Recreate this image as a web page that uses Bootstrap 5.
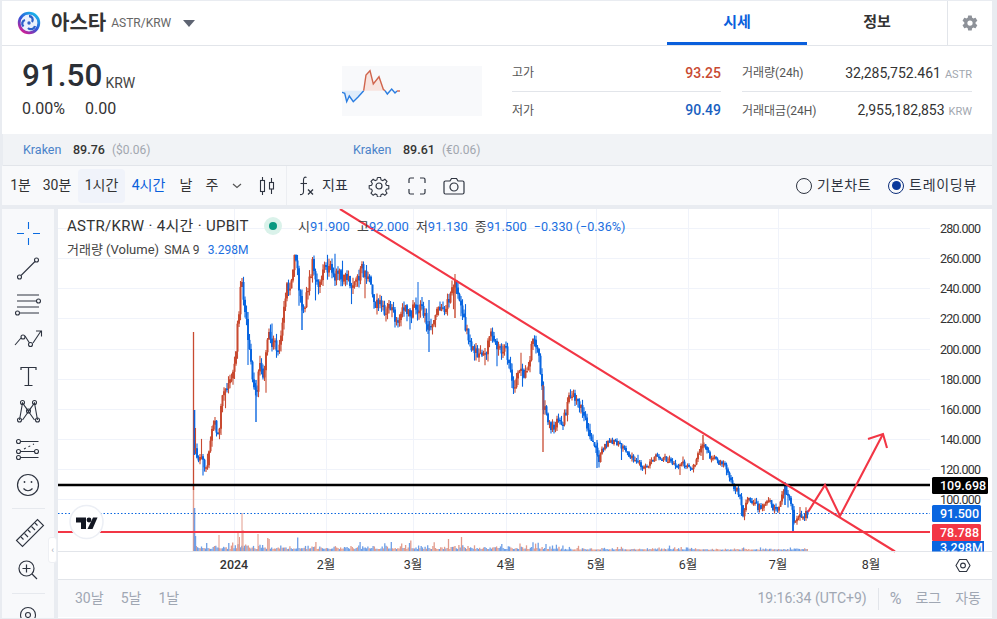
<!DOCTYPE html>
<html lang="ko">
<head>
<meta charset="utf-8">
<title>아스타 ASTR/KRW</title>
<link rel="stylesheet" href="https://cdn.jsdelivr.net/npm/bootstrap@5.3.0/dist/css/bootstrap.min.css">
<style>
html,body{height:619px;overflow:hidden}
body{margin:0;background:#e9ecf1;font-family:Roboto,"Noto Sans CJK KR",sans-serif;color:#333;font-size:14px}
.shell{width:990px;margin-left:2px;padding-top:1px}
.head{height:45px;background:#fff;border-bottom:1px solid #e2e5ea}
.coin-name{font-size:20px;font-weight:700;margin-left:10px;color:#333;line-height:1}
.coin-pair{font-size:12px;color:#666;margin-left:5px}
.caret-shape{width:0;height:0;border-left:6.5px solid transparent;border-right:6.5px solid transparent;border-top:7px solid #5e6472;margin-left:12px}
.tab-item{width:140px;height:44px;font-size:15px;font-weight:700;display:flex;align-items:center;justify-content:center;color:#333;border-bottom:3px solid transparent;padding-top:1px}
.tab-on{color:#0a5fdc;border-bottom-color:#0a5fdc}
.gear-box{width:45px;height:44px;border-left:1px solid #e2e5ea;margin-left:0}
.quote{height:88px;background:#fff}
.price-box{width:340px;padding:12px 0 0 20px}
.price-big{font-size:31.5px;font-weight:500;line-height:36px;color:#2b2f36}
.price-unit{font-size:14px;margin-left:3px;color:#444}
.price-chg{font-size:16px;margin-top:4px;line-height:22px;color:#333}
.spark-box{width:140px;height:50px;background:#f8f9fb;margin-top:20px}
.stat-a{width:209px;margin-left:30px;padding-top:9px}
.stat-b{width:230px;margin-left:21px;padding-top:9px}
.stat-row{height:37px;font-size:12px;color:#555}
.stat-line{border-bottom:1px solid #e2e5ea}
.stat-num{font-size:14px;font-weight:500}
.up-c{color:#c84a31}.dn-c{color:#1a5fc0}
.stat-val{font-size:14px;color:#333}
.stat-unit{font-size:11px;color:#a2a7af;margin-left:4px}
.ref-bar{height:32px;background:#f1f3f6;margin-left:1px;font-size:12.5px;border-bottom:1px solid #e2e5ea;padding-top:1px}
.ref-a{width:350px;padding-left:20px}
.ref-ex{color:#4a82c9;width:50px}
.ref-p{font-weight:500;color:#333;width:39px}
.ref-f{color:#a2a7af;font-size:12px}
.tools{height:39px;background:#f8f9fb;margin-top:0;color:#2e3440}
.tf{font-size:14px;display:flex;align-items:center;justify-content:center;height:34px;border-radius:4px;color:#333;white-space:nowrap}
.tf-on{background:#f0f3fa;margin:0 6px 0 7px;width:47px}
.tf-blue{color:#0a5fdc}
.tool-sep{width:1px;height:39px;background:#eceef2}
.radio-dot{width:16px;height:16px;border-radius:50%;border:1.5px solid #2e3440;display:inline-block;position:relative;margin-right:5px}
.radio-sel{border-color:#0d2f7a}
.radio-sel::after{content:"";position:absolute;inset:2.5px;border-radius:50%;background:#0b3a9c}
.radio-txt{white-space:nowrap;letter-spacing:.7px}
.work{margin-top:4px;height:409px}
.side{width:52px;background:#f8f9fb;height:409px;overflow:hidden;margin-right:4px}
.side svg{display:block}
.chart-col{width:934px;background:#fff;height:409px;display:flex;flex-direction:column}
.plot{position:relative;height:370px;flex:none}
.plot svg{display:block}
.legend-a{position:absolute;left:9px;top:7px;font-size:15px;letter-spacing:.3px;color:#333;line-height:20px;white-space:nowrap}
.legend-b{position:absolute;left:9px;top:31px;font-size:13px;color:#444;line-height:20px;white-space:nowrap}
.live-dot{width:18px;height:18px;border-radius:50%;background:#daf2ea;display:flex;align-items:center;justify-content:center;position:absolute;left:206px;top:8px}
.live-dot i{width:8px;height:8px;border-radius:50%;background:#089981;display:block}
.ohlc{position:absolute;left:240px;top:8px;font-size:13px;color:#444;line-height:20px;white-space:nowrap}
.ohlc b,.legend-b b{font-weight:400;color:#1c6fe0}
.ohlc span{margin-right:7px}
.ohlc-tail{font-size:12.6px}
.collapse-tab{position:absolute;left:-10px;top:328px;width:9px;height:26px;background:#fff;border:1px solid #eef0f4;border-radius:3px;color:#a6adb9;font-size:9px;line-height:24px;text-align:center}
.foot-bar{height:38px;background:#f8f9fb;border-top:1px solid #e2e5ea;color:#a0a7b3;font-size:14px;flex:none}
.foot-sep{width:1px;height:22px;background:#e2e5ea}
.ax{font-family:Roboto,"Noto Sans CJK KR",sans-serif;font-size:12.5px;fill:#333}
.axb{font-family:Roboto,sans-serif;font-size:12.5px;font-weight:500}
</style>
</head>
<body>
<div class="shell">
  <div class="head d-flex align-items-center">
    <svg width="24" height="24" viewBox="0 0 24 24" style="margin-left:15px">
      <defs><linearGradient id="astg" x1="0.8" y1="0" x2="0.1" y2="1"><stop offset="0" stop-color="#19b5ea"/><stop offset=".5" stop-color="#2f55d8"/><stop offset="1" stop-color="#e6178c"/></linearGradient></defs>
      <circle cx="12" cy="12" r="9.800" fill="#eaf0fc" stroke="url(#astg)" stroke-width="2.800"/>
      <g fill="none" stroke="#2d5fc8" stroke-width="2.300"><path d="M12 5a3.800 3.800 0 0 1 3 6"/><path d="M6.500 15.500a3.800 3.800 0 0 1 1.500-6.500"/><path d="M18 15a4.200 4.200 0 0 1-7 2"/></g>
      <circle cx="12" cy="12" r="1.700" fill="#2d5fc8"/>
    </svg>
    <span class="coin-name">아스타</span><span class="coin-pair">ASTR/KRW</span><span class="caret-shape"></span>
    <div class="ms-auto d-flex">
      <div class="tab-item tab-on">시세</div>
      <div class="tab-item">정보</div>
      <div class="gear-box d-flex align-items-center justify-content-center">
        <svg width="18" height="18" viewBox="0 0 24 24"><path fill="#8e9299" d="M19.400 13c.04-.33.06-.66.06-1s-.02-.67-.06-1l2.100-1.650a.5.5 0 0 0 .12-.64l-2-3.460a.5.5 0 0 0-.61-.22l-2.490 1a7.300 7.300 0 0 0-1.730-1l-.38-2.650A.49.49 0 0 0 13.900 2h-4a.49.49 0 0 0-.49.42l-.38 2.650c-.63.26-1.200.6-1.730 1l-2.490-1a.5.5 0 0 0-.61.22l-2 3.460a.5.5 0 0 0 .12.64L4.420 11c-.04.33-.06.67-.06 1s.02.67.06 1l-2.100 1.650a.5.5 0 0 0-.12.64l2 3.460c.12.22.39.3.61.22l2.490-1c.53.4 1.100.74 1.730 1l.38 2.650c.04.24.25.42.49.42h4c.25 0 .45-.18.49-.42l.38-2.650c.63-.26 1.200-.6 1.730-1l2.490 1c.23.08.49 0 .61-.22l2-3.460a.5.5 0 0 0-.12-.64zM12 15.500a3.500 3.500 0 1 1 0-7 3.500 3.500 0 0 1 0 7z"/></svg>
      </div>
    </div>
  </div>

  <div class="quote d-flex">
    <div class="price-box">
      <div class="d-flex align-items-end"><span class="price-big">91.50</span><span class="price-unit">KRW</span></div>
      <div class="price-chg d-flex gap-0"><span style="width:63px">0.00%</span><span>0.00</span></div>
    </div>
    <div class="spark-box">
      <svg width="140" height="50" viewBox="0 0 140 50">
        <polygon fill="#dfecfb" points="0,24.700 0,26.300 2.700,27.300 4.700,35.700 7.300,30 11.300,35.700 16.300,30.700 21.700,24.700"/>
        <polygon fill="#f8e4df" points="21.700,24.700 24,9 28,4.700 31.300,18 37,10.700 41.300,23.300 43,24.700"/>
        <polyline fill="none" stroke="#2a7de1" stroke-width="1.400" points="0,26.300 2.700,27.300 4.700,35.700 7.300,30 11.300,35.700 16.300,30.700 21.700,24.700"/>
        <polyline fill="none" stroke="#d0654d" stroke-width="1.400" points="21.700,24.700 24,9 28,4.700 31.300,18 37,10.700 41.300,23.300 43,24.700"/>
        <polyline fill="none" stroke="#2a7de1" stroke-width="1.400" points="43,24.700 45.300,28 49.700,23 53,27 55,25"/>
        <polyline fill="none" stroke="#d0654d" stroke-width="1.400" points="55,25 58,25"/>
      </svg>
    </div>
    <div class="stat-a">
      <div class="stat-row stat-line d-flex justify-content-between align-items-center"><span>고가</span><span class="stat-num up-c">93.25</span></div>
      <div class="stat-row d-flex justify-content-between align-items-center"><span>저가</span><span class="stat-num dn-c">90.49</span></div>
    </div>
    <div class="stat-b">
      <div class="stat-row stat-line d-flex justify-content-between align-items-center"><span>거래량(24h)</span><span class="text-end"><span class="stat-val">32,285,752.461</span><span class="stat-unit">ASTR</span></span></div>
      <div class="stat-row d-flex justify-content-between align-items-center"><span>거래대금(24H)</span><span class="text-end"><span class="stat-val">2,955,182,853</span><span class="stat-unit">KRW</span></span></div>
    </div>
  </div>

  <div class="ref-bar d-flex align-items-center">
    <div class="ref-a d-flex"><span class="ref-ex">Kraken</span><span class="ref-p">89.76</span><span class="ref-f">($0.06)</span></div>
    <div class="d-flex"><span class="ref-ex">Kraken</span><span class="ref-p">89.61</span><span class="ref-f">(€0.06)</span></div>
  </div>

  <div class="tools d-flex align-items-center">
    <div class="tf" style="margin-left:8px;width:21px">1분</div>
    <div class="tf" style="margin-left:12px;width:28px">30분</div>
    <div class="tf tf-on">1시간</div>
    <div class="tf tf-blue" style="width:35px">4시간</div>
    <div class="tf" style="margin-left:14px;width:12px">날</div>
    <div class="tf" style="margin-left:13px;width:14px">주</div>
    <svg width="10" height="6" viewBox="0 0 10 6" style="margin-left:13px"><path d="M1 1l4 3.500L9 1" fill="none" stroke="#555" stroke-width="1.200"/></svg>
    <svg width="16" height="20" viewBox="0 0 16 20" style="margin-left:17px"><g fill="none" stroke="#2e3440" stroke-width="1.100"><rect x="1.500" y="4.500" width="4" height="11"/><path d="M3.500 1v3.500M3.500 15.500V19"/><rect x="10.500" y="6.500" width="4" height="6.500"/><path d="M12.500 2v4.500M12.500 13v5"/></g></svg>
    <div class="tool-sep" style="margin-left:11px"></div>
    <svg width="18" height="22" viewBox="0 0 18 22" style="margin-left:10px"><g fill="none" stroke="#2e3440" stroke-width="1.100"><path d="M9.500 2.500C7.500 1.500 6.500 3 6.500 5v11.500c0 2-1 3.500-3.500 3"/><path d="M3.500 8.500h6.500"/><path d="M11 14.500l5 5M16 14.500l-5 5" stroke-width="1.300"/></g></svg>
    <span style="margin-left:7px;width:27px;white-space:nowrap;font-size:14px">지표</span>
    <svg width="22" height="22" viewBox="0 0 22 22" style="margin-left:19px"><g fill="none" stroke="#2e3440" stroke-width="1.200"><circle cx="11" cy="11" r="3"/><path d="M9.300 1.500h3.400l.6 2.700 1.900.8 2.300-1.500 2.400 2.400-1.500 2.300.8 1.900 2.700.6v3.400l-2.700.6-.8 1.900 1.500 2.300-2.400 2.400-2.300-1.500-1.900.8-.6 2.700H9.300l-.6-2.700-1.900-.8-2.300 1.500-2.400-2.400 1.500-2.300-.8-1.900-2.700-.6" transform="translate(1.100 1.100) scale(.9)"/><path d="M9.300 1.500l-.6 2.700-1.900.8-2.300-1.500-2.400 2.400 1.500 2.300-.8 1.900-2.700.6v3.400" transform="translate(1.100 1.100) scale(.9)"/></g></svg>
    <svg width="18" height="18" viewBox="0 0 18 18" style="margin-left:18px"><path d="M1 6V2.500A1.500 1.500 0 0 1 2.500 1H6M12 1h3.500A1.500 1.500 0 0 1 17 2.500V6M17 12v3.500a1.500 1.500 0 0 1-1.500 1.500H12M6 17H2.500A1.500 1.500 0 0 1 1 15.500V12" fill="none" stroke="#2e3440" stroke-width="1.200"/></svg>
    <svg width="22" height="18" viewBox="0 0 22 18" style="margin-left:17px"><g fill="none" stroke="#2e3440" stroke-width="1.200"><path d="M2.500 4H7l1.500-2.500h5L15 4h4.500A1.500 1.500 0 0 1 21 5.500v10a1.500 1.500 0 0 1-1.500 1.500h-17A1.500 1.500 0 0 1 1 15.500v-10A1.500 1.500 0 0 1 2.500 4z"/><circle cx="11" cy="10" r="4"/></g></svg>
    <div class="ms-auto d-flex align-items-center" style="padding-right:15px">
      <span class="radio-dot"></span><span class="radio-txt" style="width:58px">기본차트</span>
      <span class="radio-dot radio-sel" style="margin-left:13px"></span><span class="radio-txt">트레이딩뷰</span>
    </div>
  </div>

  <div class="work d-flex">
    <div class="side">
      <svg width="52" height="409" viewBox="2 209 52 409">
        <g fill="none" stroke="#2e3440" stroke-width="1.100">
          <path d="M28.500 222v7M28.500 238v7M17 233.500h7M33 233.500h7" stroke="#0a6be0" stroke-width="1.100"/>
          <g><circle cx="19.500" cy="277" r="2"/><circle cx="36.500" cy="260" r="2"/><path d="M21 275.500l14-14"/></g>
          <g><path d="M17 295h22M17 301h19M17 307h22M20 313h19"/><circle cx="38.500" cy="301" r="2"/><circle cx="17.500" cy="313" r="2"/></g>
          <g><path d="M15 345l6-7M25 336l4.500 7M33 343l8-12M36 331h5.500v5.500"/><circle cx="23" cy="337" r="2"/><circle cx="30.500" cy="344.500" r="2"/></g>
          <path d="M21 370v-2.500h15v2.500M28.500 367.500v18M24.500 385.500h8" stroke-width="1.200"/>
          <g><path d="M19.500 420l3-17 6 8 6-8 3 17M22.500 403l12 17M34.500 403l-12 17"/><circle cx="22.500" cy="402.500" r="2"/><circle cx="34.500" cy="402.500" r="2"/><circle cx="19.500" cy="420" r="2"/><circle cx="37.500" cy="420" r="2"/><circle cx="28.500" cy="411" r="2"/></g>
          <g><path d="M20.500 441.500h18M20.500 451.500h14M20.500 457.500h18"/><path d="M24 449l10-5" stroke-dasharray="2 3"/><circle cx="18.500" cy="441.500" r="2"/><circle cx="18.500" cy="451.500" r="2"/><circle cx="36.500" cy="451.500" r="2"/><circle cx="18.500" cy="457.500" r="2"/></g>
          <g stroke-width="1.200"><circle cx="28" cy="485" r="10.500"/><path d="M23.500 488.500c2.500 3 6.500 3 9 0"/></g>
          <circle cx="24.500" cy="482" r=".9" fill="#2e3440" stroke="none"/><circle cx="31.500" cy="482" r=".9" fill="#2e3440" stroke="none"/>
          <g><path d="M17 541l21-21 6 6-21 21z" transform="translate(-0.500 -0.500)"/><path d="M21 537l2.500 2.500M24.500 533.500l3.500 3.500M28 530l2.500 2.500M31.500 526.500l3.500 3.500M35 523l2.500 2.500"/></g>
          <g stroke-width="1.200"><circle cx="26.500" cy="568.500" r="7.500"/><path d="M32 574l5 5M26.500 564.500v8M22.500 568.500h8"/></g>
          <g><circle cx="28" cy="615" r="7.500"/><circle cx="28" cy="615" r="2.500"/></g>
        </g>
        <path d="M12 508.500h33M12 593.500h33" stroke="#e6e9ee" stroke-width="1"/>
      </svg>
    </div>
    <div class="chart-col">
      <div class="plot">
        <svg id="pl" width="934" height="370" viewBox="58 209 934 370"></svg>
        <div class="legend-a">ASTR/KRW · 4시간 · UPBIT</div>
        <div class="live-dot"><i></i></div>
        <div class="ohlc"><span>시<b>91.900</b></span><span>고<b>92.000</b></span><span>저<b>91.130</b></span><span>종<b>91.500</b></span><b class="ohlc-tail">−0.330 (−0.36%)</b></div>
        <div class="legend-b">거래량 (Volume) <span style="font-size:12px;margin-left:2px">SMA 9</span> <b style="font-size:12px;margin-left:5px">3.298M</b></div>
        <div class="collapse-tab">‹</div>
      </div>
      <div class="foot-bar d-flex align-items-center">
        <span style="margin-left:17px">30날</span><span style="margin-left:17px">5날</span><span style="margin-left:17px">1날</span>
        <span class="ms-auto">19:16:34 (UTC+9)</span>
        <span class="foot-sep" style="margin-left:11px"></span>
        <span style="margin-left:11px;font-size:16px">%</span><span style="margin-left:14px">로그</span><span style="margin-left:14px;margin-right:11px">자동</span>
      </div>
    </div>
  </div>
</div>
<script>
(function(){
var s=1234567;function r(){s=(s*1664525+1013904223)%4294967296;return s/4294967296;}
var k=[[193,420],[196,450],[200,455],[206,467],[210,450],[213,425],[217,432],[219,425],[222,395],[226,392],[229,385],[233,365],[236,345],[239,310],[241,275],[244,300],[247,330],[250,355],[256,400],[260,360],[264,385],[267,330],[272,345],[277,350],[282,320],[287,290],[291,290],[295,245],[299,285],[302,315],[306,300],[313,262],[318,285],[325,270],[333,272],[347,285],[363,272],[377,302],[397,318],[418,305],[429,322],[443,312],[455,285],[463,318],[472,352],[480,358],[492,337],[507,353],[513,380],[527,370],[533,338],[540,362],[543,405],[550,425],[563,418],[572,395],[577,398],[590,432],[598,458],[610,440],[625,450],[640,467],[655,458],[670,462],[695,468],[703,440],[710,460],[722,462],[732,482],[740,497],[743,513],[748,500],[755,505],[762,510],[765,502],[778,510],[785,485],[792,510],[794,528],[798,517],[808,512]];
function base(x){for(var i=1;i<k.length;i++){if(x<=k[i][0]){var a=k[i-1],b=k[i];return a[1]+(b[1]-a[1])*(x-a[0])/(b[0]-a[0]);}}return 512;}
function L(x1,y1,x2,y2,c,w,extra){return '<line x1="'+x1+'" y1="'+y1+'" x2="'+x2+'" y2="'+y2+'" stroke="'+c+'" stroke-width="'+w+'"'+(extra||'')+'/>';}
function trend(x){return 209+(x-340)*.617;}
var h='',UP='#c84a31',DN='#0a66e0';
for(var p=280;p>=100;p-=20){var y=Math.round(228+(280-p)*1.5078)+.5;h+=L(58,y,930,y,'#f0f3fa',1);}
[234,326,413,506,596,688,778,871].forEach(function(x){h+=L(x+.5,209,x+.5,551,'#f0f3fa',1);});
var vh='';
for(var x=195;x<808;x+=1.3){var decay=x<560?1:(x<700?.45:.3);var v=(1+r()*r()*r()*14)*decay+1;var c=r()>.5?'#e29b8c':'#6f9fe6';vh+=L(x.toFixed(1),551,x.toFixed(1),(551-v).toFixed(1),c,1.3);}
h+=vh;
h+=L(193.5,551,193.5,485,'#e29b8c',1.4)+L(194.5,551,194.5,508,'#6f9fe6',1.6)+L(195.500,551,195.500,536,'#6f9fe6',1.4);
[[219,535],[238,533],[239.500,537],[242,513],[243,530],[258,534]].forEach(function(a){h+=L(a[0],551,a[0],a[1],'#e29b8c',1);});
h+=L(58,513.500,930,513.500,'#0a66e0',1,' stroke-dasharray="1.500 2"');
h+=L(193.500,332,193.500,490,UP,1.3)+L(194.500,410,194.500,455,DN,1.6);
var prev=base(196),n=0;
for(var x=195.500;x<808;x+=1.5){
  var amp=x<545?15:(x<600?13:(x<700?7:8));
  n=n*.35+(r()-.5)*amp;
  var c0=base(x)+n,o=prev,hi=Math.min(o,c0)-r()*amp*.5,lo=Math.max(o,c0)+r()*amp*.5;
  if(r()<.05)lo+=r()*amp*1.400; if(r()<.05)hi-=r()*amp;
  if(x>455&&hi<trend(x)+1)hi=trend(x)+1;
  var col=c0<o?UP:DN,X=x.toFixed(1);
  h+=L(X,hi.toFixed(1),X,lo.toFixed(1),col,1.1)+L(X,o.toFixed(1),X,(Math.abs(c0-o)<1?o+1.500:c0).toFixed(1),col,2);
  prev=c0;
}
h+=L(429,300,429,352,DN,1.200)+L(418,282,418,312,DN,1)+L(455,280,455,318,UP,1.400)+L(793,510,793,531,DN,1.800)+L(785,482,785,505,DN,1.500)+L(703,435,703,460,UP,1.400)+L(543,385,543,452,UP,1.300)+L(597,440,597,468,DN,1.200)+L(256,380,256,422,DN,1.400)+L(302,300,302,330,DN,1.400);
var R='#f23645';
h+=L(58,485,932,485,'#000',2.400);
h+=L(58,532,932,532,R,2.200);
h+='<line x1="340" y1="209" x2="895" y2="551.500" stroke="'+R+'" stroke-width="2.100"/>';
h+='<polyline fill="none" stroke="'+R+'" stroke-width="2.100" points="808,512 825,485 840,516 883,434"/><polyline fill="none" stroke="'+R+'" stroke-width="2.100" points="868,439 883,434 887,448"/>';
h+='<rect x="930" y="209" width="62" height="342" fill="#fff"/>';
h+=L(58,551.500,992,551.500,'#e2e5ea',1);
for(var p=280;p>=100;p-=20){var y=Math.round(228+(280-p)*1.5078)+4.500;h+='<text class="ax" x="940" y="'+y+'" fill="#333" textLength="41">'+p+'.000</text>';}
function lab(y,hh,w,bg,t){h+='<rect x="932" y="'+y+'" width="'+w+'" height="'+hh+'" rx="1.500" fill="'+bg+'"/><text class="axb" x="940" y="'+(y+hh/2+4.500)+'" fill="#fff">'+t+'</text>';}
lab(477,17,56,'#000','109.698');lab(505,17,49,'#0a66e0','91.500');lab(524,17,49,'#f23645','78.788');
h+='<clipPath id="vc"><rect x="932" y="541" width="60" height="10.500"/></clipPath><g clip-path="url(#vc)"><rect x="932" y="541" width="52" height="17" fill="#0a66e0"/><text class="axb" x="940" y="552" fill="#fff">3.298M</text></g>';
[[234,'2024'],[326,'2월'],[413,'3월'],[506,'4월'],[596,'5월'],[688,'6월'],[778,'7월'],[871,'8월']].forEach(function(a,i){h+='<text x="'+a[0]+'" y="569" text-anchor="middle" class="ax"'+(i==0?' style="font-weight:500"':'')+'>'+a[1]+'</text>';});
h+='<g fill="none" stroke="#2e3440" stroke-width="1.100"><path d="M956 565.500l3.500-6h7l3.500 6-3.500 6h-7z"/><circle cx="963" cy="565.500" r="2.400"/></g>';
h+='<circle cx="86.500" cy="522" r="16.500" fill="#fff" stroke="#eceff5" stroke-width="1.500"/>';
h+='<path fill="#131722" d="M76 517.500h10v11.500h-5v-6.500h-5z"/><circle cx="89" cy="520" r="2.400" fill="#131722"/><path fill="#131722" d="M93 517.500h4.500l-5 11.500h-5z"/>';
document.getElementById('pl').innerHTML=h;
})();
</script>
<script src="https://cdn.jsdelivr.net/npm/bootstrap@5.3.0/dist/js/bootstrap.bundle.min.js"></script>
</body>
</html>
